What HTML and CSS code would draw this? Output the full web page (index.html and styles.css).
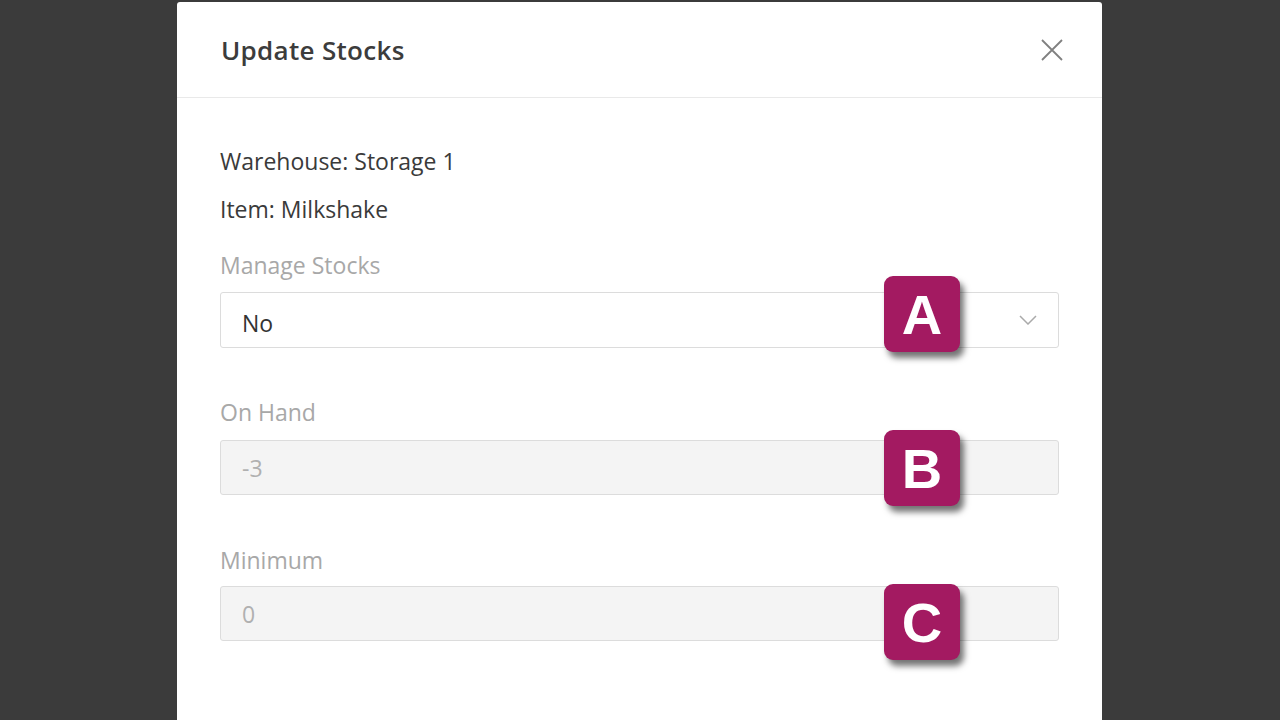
FILE: index.html
```html
<!DOCTYPE html>
<html>
<head>
<meta charset="utf-8">
<link rel="stylesheet" href="styles.css">
</head>
<body>
<div class="page">
  <div class="modal">
    <div class="modal-header">
      <h2 class="title">Update Stocks</h2>
      <svg class="close" width="22" height="22" viewBox="0 0 22 22"><path d="M1 1 L21 21 M21 1 L1 21" stroke="#808080" stroke-width="1.8" fill="none"/></svg>
    </div>
    <div class="modal-body">
      <p class="info">Warehouse: Storage 1</p>
      <p class="info info-item">Item: Milkshake</p>
      <div class="field field-1">
        <label class="label">Manage Stocks</label>
        <div class="control select">
          <span class="value">No</span>
          <svg class="chev" width="18" height="10" viewBox="0 0 18 10"><path d="M1 1 L9 9 L17 1" stroke="#aaa" stroke-width="1.5" fill="none"/></svg>
          <span class="badge badge-a">A</span>
        </div>
      </div>
      <div class="field field-2">
        <label class="label">On Hand</label>
        <div class="control disabled">
          <span class="value">-3</span>
          <span class="badge badge-b">B</span>
        </div>
      </div>
      <div class="field field-3">
        <label class="label">Minimum</label>
        <div class="control disabled">
          <span class="value">0</span>
          <span class="badge badge-c">C</span>
        </div>
      </div>
    </div>
  </div>
</div>
</body>
</html>
```
FILE: styles.css
```css
* { box-sizing: border-box; }
html, body { margin: 0; padding: 0; }
body {
  background: #3b3b3b;
  font-family: "Open Sans", "Noto Sans", sans-serif;
  width: 1280px;
  height: 720px;
  overflow: hidden;
}
.page {
  display: flex;
  padding: 2px 0 0 177px;
}
.modal {
  width: 925px;
  height: 718px;
  background: #fff;
  border-radius: 3px 3px 0 0;
}
.modal-header {
  height: 96px;
  border-bottom: 1px solid #e9e9e9;
  display: flex;
  align-items: center;
  justify-content: space-between;
  padding: 0 39px 0 44px;
}
.title {
  margin: 0;
  font-size: 26px;
  font-weight: 600;
  color: #3c3c3c;
  letter-spacing: 0.3px;
}
.close { display: block; }
.modal-body {
  padding: 47px 43px 0 43px;
}
.info {
  margin: 0;
  font-size: 23px;
  line-height: 32px;
  color: #3a3a3a;
}
.info-item { margin-top: 16px; }
.label {
  display: block;
  font-size: 23px;
  line-height: 32px;
  color: #a8a8a8;
}
.field-1 { margin-top: 24px; }
.field-2 { margin-top: 48px; }
.field-3 { margin-top: 49px; }
.control {
  position: relative;
  margin-top: 10px;
  height: 56px;
  border: 1px solid #dcdcdc;
  border-radius: 3px;
  display: flex;
  align-items: center;
  padding: 0 21px;
}
.select { background: #fff; justify-content: space-between; padding-right: 21px; }
.field-1 .control { margin-top: 11px; }
.select .value { padding-top: 5px; }
.disabled { background: #f4f4f4; height: 55px; }
.field-2 .control { margin-top: 12px; }
.value { font-size: 23px; color: #333; }
.disabled .value { color: #b0b0b0; }
.badge {
  position: absolute;
  left: 663px;
  width: 76px;
  height: 76px;
  border-radius: 9px;
  background: #a31a61;
  color: #fff;
  font-family: "Liberation Sans", Arial, sans-serif;
  font-weight: 700;
  font-size: 56px;
  display: flex;
  align-items: center;
  justify-content: center;
  box-shadow: 4px 6px 6px rgba(0,0,0,0.55);
}
.badge-a { top: -17px; }
.badge-b { top: -11px; }
.badge-c { top: -3px; }
```
